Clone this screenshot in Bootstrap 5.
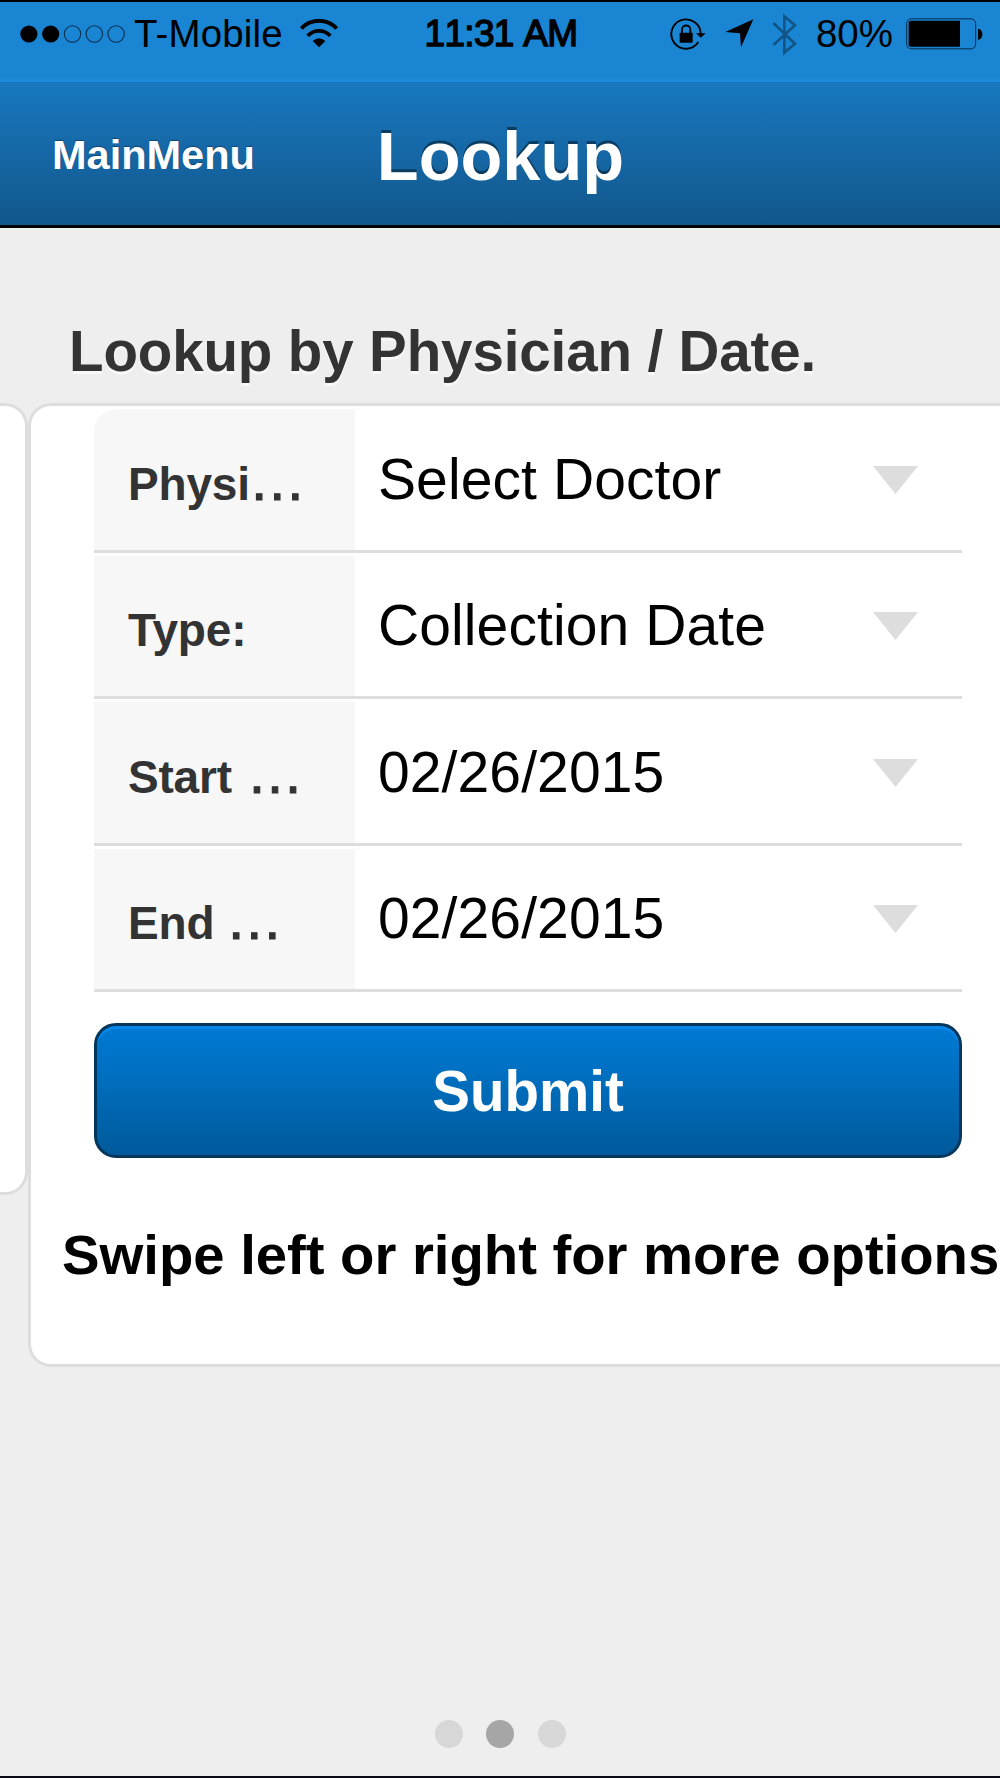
<!DOCTYPE html>
<html lang="en">
<head>
<meta charset="utf-8">
<meta name="viewport" content="width=device-width, initial-scale=1">
<title>Lookup</title>
<link href="https://cdn.jsdelivr.net/npm/bootstrap@5.3.0/dist/css/bootstrap.min.css" rel="stylesheet">
<style>
  body { font-family: "Liberation Sans", Arial, sans-serif; background: #eee; color: #000; }
  .screen { height: 1778px; border-top: 2px solid #000; border-bottom: 2px solid #0a0a14; }

  /* status bar */
  .status { height: 80px; padding: 0 17px 16px 20px; background: linear-gradient(#1a85d3 94%, #1b8ddd); font-size: 38.5px; line-height: 64px; }
  .status svg { display: block; flex: none; }
  .status-side { flex: 1 1 0; height: 63px; }
  .carrier { margin-left: 9px; letter-spacing: .15px; }
  .wifi { margin-left: 16px; }
  .clock { font-size: 37px; letter-spacing: -.7px; font-kerning: none; -webkit-text-stroke: 1.4px #000; margin-right: 1px; }
  .lock { margin-right: 19px; }
  .locate { margin-right: 18px; }
  .bt { margin-right: 19px; margin-top: 2px; }
  .percent { margin-right: 13px; }

  /* title bar */
  .titlebar { height: 146px; background: linear-gradient(#1878be, #1669a8 45%, #11578b); border-bottom: 3px solid #000; color: #fff; }
  .titlebar .side { flex: 1 1 0; padding: 2px 0 0 52px; font-size: 41.5px; line-height: 60px; text-shadow: 0 -1px 1px #11466f; }
  .titlebar h1 { font-size: 68.5px; line-height: 76px; padding: 6px 0 0 1px; text-shadow: 0 -3px 0 #0b3c61; }

  /* form card */
  .section-title { padding: 94px 0 21px 69px; font-size: 56.5px; letter-spacing: -.12px; line-height: 60px; color: #333; text-shadow: 0 3px 0 #f8f8f8; }
  .slide { background: #fff; border: 3px solid #ddd; }
  .slide-prev { width: 28px; height: 792px; flex: none; border-left: 0; border-radius: 0 23px 23px 0; }
  .slide-form { height: 964px; border-right: 0; border-radius: 23px 0 0 23px; }
  .fields { margin: 0 38px 0 63px; }
  .field-row { height: 146.5px; padding-top: 3px; border-bottom: 3px solid #ddd; }
  .field-row:first-child .field-label { border-top-left-radius: 23px; }
  .field-label { width: 260.5px; padding: 10px 0 0 34px; background: #f7f7f7; color: #333; font-size: 46px; letter-spacing: -.2px; }
  .dots { font-size: 57px; font-weight: 400; line-height: 1; margin-left: -1px; -webkit-text-stroke: 1.2px #333; }
  .spaced .dots { margin-left: 2px; }
  .field-value { padding: 0 44.5px 1px 23.5px; font-size: 57px; letter-spacing: .1px; line-height: 60px; }
  .field-value svg { margin-top: 2px; }
  .submit-btn { height: 135px; margin: 31px 38px 0 63px; padding: 2px 0 0; border: 3px solid #04365c; border-radius: 22px;
    background: linear-gradient(#007ad4, #0070c2 35%, #005a9a); box-shadow: inset 0 3px 0 #0588e8; color: #fff; font-size: 56.5px; line-height: 60px; }
  .hint { padding: 67px 0 0 31px; font-size: 56.3px; letter-spacing: -.03px; line-height: 60px; }

  .pager { gap: 23.5px; padding-bottom: 28px; }
  .pager span { width: 28px; height: 28px; border-radius: 50%; background: #d7d7d7; }
  .pager .current { background: #a6a6a6; }
</style>
<script src="https://cdn.jsdelivr.net/npm/bootstrap@5.3.0/dist/js/bootstrap.bundle.min.js"></script>
</head>
<body>
<div class="screen d-flex flex-column overflow-hidden">
  <div class="status d-flex">
    <div class="status-side d-flex align-items-center">
      <svg width="105" height="18" viewBox="0 0 105 18"><circle cx="8.9" cy="9" r="8.6"/><circle cx="30.7" cy="9" r="8.6"/><g fill="none" stroke="#07304f" stroke-width="1.1"><circle cx="52.5" cy="9" r="8.2"/><circle cx="74.3" cy="9" r="8.2"/><circle cx="96.1" cy="9" r="8.2"/></g></svg>
      <span class="carrier text-nowrap">T-Mobile</span>
      <svg class="wifi" width="40" height="30" viewBox="898 53 120 90"><g fill="none" stroke="#000"><path d="M905 81.500A72.500 72.500 0 0 1 1011 81.500" stroke-width="12"/><path d="M924 103.500A46 46 0 0 1 992 103.500" stroke-width="11"/></g><path d="M939 119Q958 102 977 119L958 138Z"/></svg>
    </div>
    <div class="clock text-nowrap">11:31 AM</div>
    <div class="status-side d-flex align-items-center justify-content-end">
      <svg class="lock" width="36" height="32" viewBox="91 50 108 96"><path d="M183 98A44 44 0 1 0 176 122" fill="none" stroke="#000" stroke-width="5.500"/><path d="M169 96H198L183.500 109Z"/><rect x="120" y="94" width="39" height="30" rx="2"/><path d="M127 95V85a12.500 12.500 0 0 1 25 0V95" fill="none" stroke="#000" stroke-width="5.500"/></svg>
      <svg class="locate" width="29" height="29" viewBox="255 59 87 87"><path d="M340 60L303 144L300 102L256 98Z"/></svg>
      <svg class="bt" width="25" height="43" viewBox="394 35 75 129"><path d="M398 65L463 127L431 154V45L463 72L398 131" fill="none" stroke="#115587" stroke-width="8"/></svg>
      <span class="percent">80%</span>
      <svg width="77" height="32" viewBox="798 53 231 96"><rect x="800" y="55.500" width="207" height="90" rx="14" fill="none" stroke="#052c4a" stroke-width="3"/><path d="M812 61H960V139H812Q806 139 806 133V67Q806 61 812 61Z"/><path d="M1014 85Q1027 87 1027 101.500Q1027 116 1014 118Z"/></svg>
    </div>
  </div>

  <nav class="titlebar d-flex align-items-center">
    <div class="side fw-bold">MainMenu</div>
    <h1 class="fw-bold m-0">Lookup</h1>
    <div class="side"></div>
  </nav>

  <h2 class="section-title fw-bold m-0 text-nowrap">Lookup by Physician / Date.</h2>

  <main class="d-flex align-items-start flex-grow-1">
    <div class="slide slide-prev"></div>
    <form class="slide slide-form flex-grow-1">
      <div class="fields">
        <div class="field-row d-flex">
          <div class="field-label d-flex align-items-center fw-bold"><span>Physi<span class="dots">…</span></span></div>
          <div class="field-value d-flex flex-grow-1 align-items-center justify-content-between"><span>Select Doctor</span><svg width="45" height="28" viewBox="0 0 45 28"><path d="M0 0H45L22.500 28Z" fill="#ddd"/></svg></div>
        </div>
        <div class="field-row d-flex">
          <div class="field-label d-flex align-items-center fw-bold"><span>Type:</span></div>
          <div class="field-value d-flex flex-grow-1 align-items-center justify-content-between"><span>Collection Date</span><svg width="45" height="28" viewBox="0 0 45 28"><path d="M0 0H45L22.500 28Z" fill="#ddd"/></svg></div>
        </div>
        <div class="field-row d-flex">
          <div class="field-label spaced d-flex align-items-center fw-bold"><span>Start <span class="dots">…</span></span></div>
          <div class="field-value d-flex flex-grow-1 align-items-center justify-content-between"><span>02/26/2015</span><svg width="45" height="28" viewBox="0 0 45 28"><path d="M0 0H45L22.500 28Z" fill="#ddd"/></svg></div>
        </div>
        <div class="field-row d-flex">
          <div class="field-label d-flex align-items-center fw-bold"><span>End <span class="dots">…</span></span></div>
          <div class="field-value d-flex flex-grow-1 align-items-center justify-content-between"><span>02/26/2015</span><svg width="45" height="28" viewBox="0 0 45 28"><path d="M0 0H45L22.500 28Z" fill="#ddd"/></svg></div>
        </div>
      </div>
      <div class="d-grid"><button type="button" class="btn submit-btn fw-bold">Submit</button></div>
      <p class="hint fw-bold m-0 text-nowrap">Swipe left or right for more options</p>
    </form>
  </main>

  <div class="pager d-flex justify-content-center">
    <span></span><span class="current"></span><span></span>
  </div>
</div>
</body>
</html>
